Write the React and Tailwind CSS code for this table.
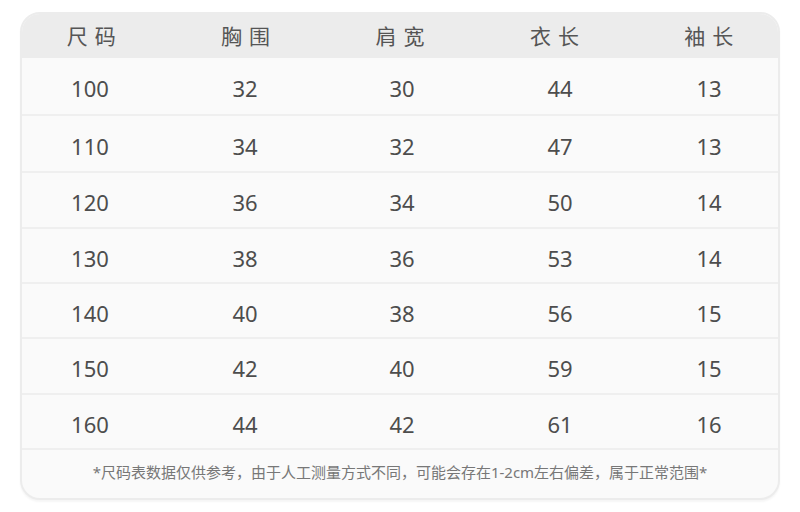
import React from "react";

const rows = [
  ["100", "32", "30", "44", "13"],
  ["110", "34", "32", "47", "13"],
  ["120", "36", "34", "50", "14"],
  ["130", "38", "36", "53", "14"],
  ["140", "40", "38", "56", "15"],
  ["150", "42", "40", "59", "15"],
  ["160", "44", "42", "61", "16"],
];
const heights = ["h-[58px]", "h-[57px]", "h-[56px]", "h-[55px]", "h-[55px]", "h-[56px]", "h-[55px]"];
const heads = ["尺码", "胸围", "肩宽", "衣长", "袖长"];
const font = { fontFamily: '"Noto Sans", "Noto Sans CJK SC", sans-serif' };

export default function App() {
  return (
    <div className="w-[800px] h-[512px] bg-white pt-[12px] pl-[20px]" style={font}>
      <div className="w-[760px] h-[488px] rounded-[20px] border-2 border-[#ececec] bg-[#fafafa] overflow-hidden flex flex-col shadow-[0_2px_2px_rgba(0,0,0,0.04)]">
        <div className="h-[46px] bg-[#ececec] shrink-0 -mx-[2px] -mt-[2px] pt-[2px]">
          <div className="grid grid-cols-5 -mx-[6px] h-full items-center">
            {heads.map((h) => (
              <div key={h} className="text-center text-[21px] tracking-[7px] pl-[7px] text-[#555] leading-none">
                {h}
              </div>
            ))}
          </div>
        </div>
        {rows.map((r, i) => (
          <div key={i} className={`${heights[i]} border-b-2 border-[#efefef] shrink-0`}>
            <div className="grid grid-cols-[156px_154px_160px_156px_142px] -ml-[10px] h-full items-center">
              {r.map((c, j) => (
                <div key={j} className="text-center text-[22px] text-[#4d4d4d] leading-none pt-[4px]">
                  {c}
                </div>
              ))}
            </div>
          </div>
        ))}
        <div className="flex-1 flex items-center justify-center text-[15px] text-[#777] pb-[4px]">
          *尺码表数据仅供参考，由于人工测量方式不同，可能会存在1-2cm左右偏差，属于正常范围*
        </div>
      </div>
    </div>
  );
}
